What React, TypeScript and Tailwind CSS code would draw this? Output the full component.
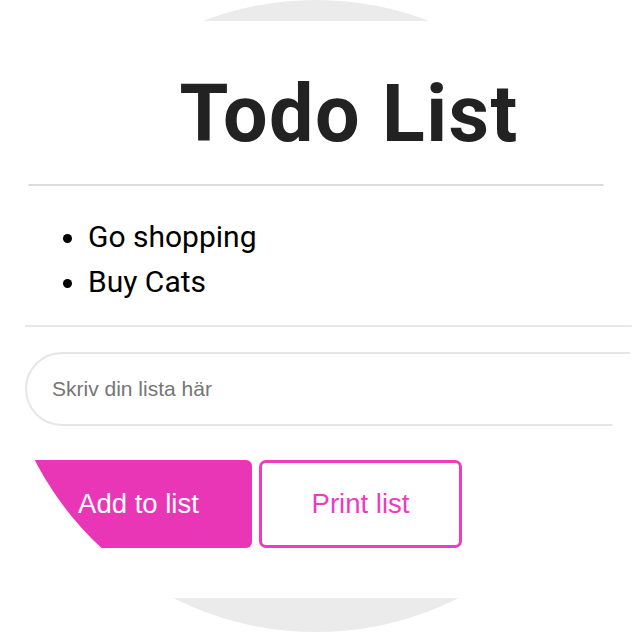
import React from "react";

export default function App() {
  return (
    <div className="w-[632px] h-[632px] bg-white overflow-hidden">
      <div className="w-[632px] h-[632px] rounded-full overflow-hidden bg-white flex flex-col">
        <div className="h-[21px] bg-[#ebebeb] shrink-0" />
        <div className="h-[577px] bg-white shrink-0 overflow-hidden">
          <div className="ml-[25px] w-[648px] flex flex-col">
            <h1
              className="mt-[54px] h-[79px] leading-[79px] text-[79px] font-bold text-center text-[#222222] tracking-[1.4px]"
              style={{ fontFamily: "Roboto, sans-serif" }}
            >
              Todo List
            </h1>
            <div className="mt-[30px] h-[2px] bg-[#dcdcdc]" />
            <ul
              className="mt-[28px] pl-[38px] flex flex-col"
              style={{ fontFamily: "Roboto, sans-serif" }}
            >
              {["Go shopping", "Buy Cats"].map((t) => (
                <li key={t} className="flex items-center h-[45px] text-[30px] leading-[45px] text-black">
                  <span className="w-[9px] h-[9px] rounded-full bg-black mr-[16px] mt-[3px]" />
                  <span>{t}</span>
                </li>
              ))}
            </ul>
            <div className="mt-[21px] h-[2px] bg-[#e8e8e8]" />
            <input
              className="mt-[25px] h-[74px] w-full rounded-full border-2 border-[#e6e6e6] pl-[25px] text-[21px] outline-none placeholder:text-[#757575]"
              style={{ fontFamily: "'Liberation Sans', Arial, sans-serif" }}
              placeholder="Skriv din lista här"
            />
            <div
              className="mt-[34px] flex gap-[7px]"
              style={{ fontFamily: "'Liberation Sans', Arial, sans-serif" }}
            >
              <button className="w-[227px] h-[88px] rounded-[6px] bg-[#e936b6] text-white text-[27.5px] flex items-center justify-center">
                Add to list
              </button>
              <button className="w-[203px] h-[88px] rounded-[7px] border-[3px] border-[#ee3cbd] bg-white text-[#ee3cbd] text-[27.5px] flex items-center justify-center">
                Print list
              </button>
            </div>
          </div>
        </div>
        <div className="flex-1 bg-[#ebebeb]" />
      </div>
    </div>
  );
}
